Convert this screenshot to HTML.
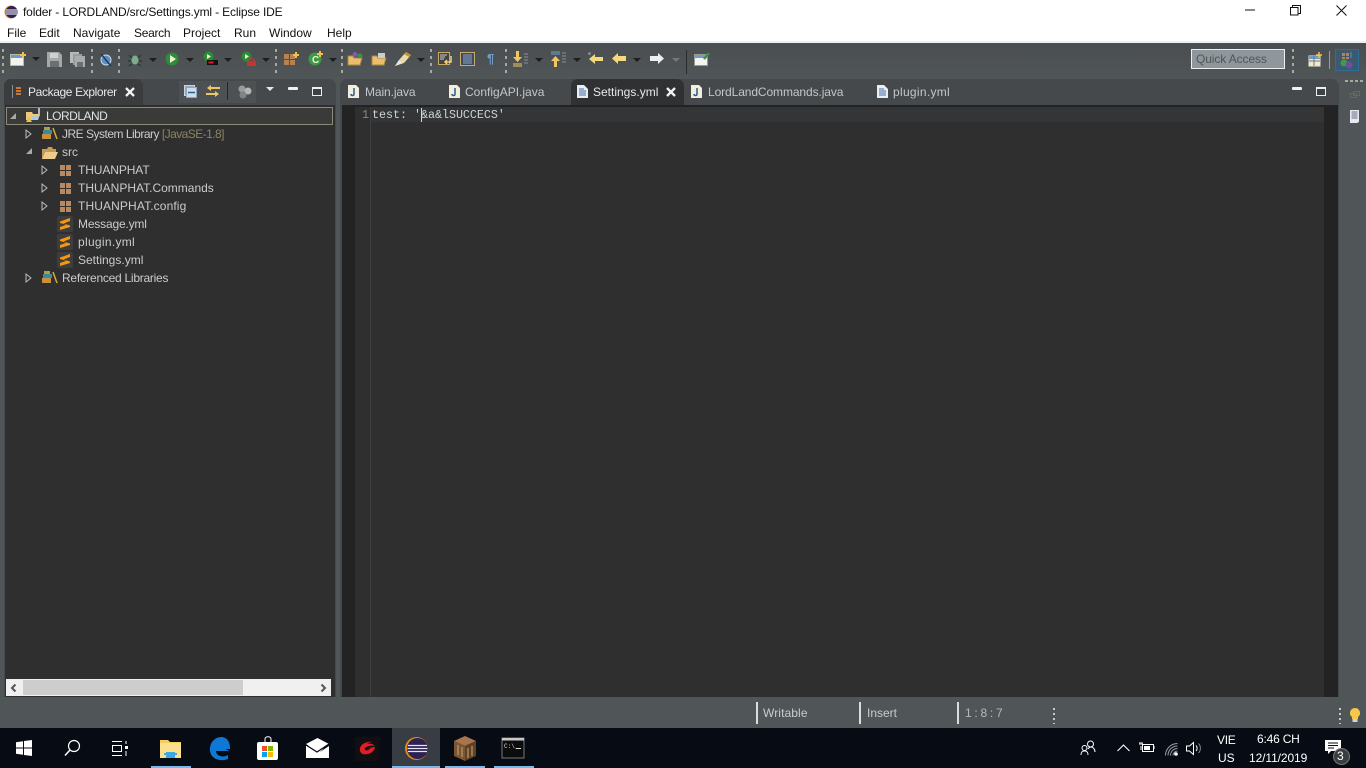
<!DOCTYPE html>
<html><head><meta charset="utf-8"><title>Eclipse IDE</title>
<style>
html,body{margin:0;padding:0;width:1366px;height:768px;overflow:hidden;background:#505557;font-family:"Liberation Sans",sans-serif;font-size:12px}
.a{position:absolute}
.t{position:absolute;white-space:nowrap;line-height:16px}
svg{position:absolute;overflow:visible}
.tree{color:#c8ccce;font-size:12px}
.tab{color:#c3c7c9;font-size:12px}
.grip{position:absolute;width:2px;height:24px;background:repeating-linear-gradient(#a9a9a0 0 3px,transparent 3px 7px)}
.dd{position:absolute;width:0;height:0;border-left:4px solid transparent;border-right:4px solid transparent;border-top:4px solid #1e1e1e}
.menu{position:absolute;top:25px;color:#111;font-size:12px;line-height:16px}
</style></head><body>

<!-- title bar -->
<div class="a" style="left:0;top:0;width:1366px;height:42px;background:#fff"></div>
<div class="a" style="left:0;top:41px;width:1366px;height:2px;background:#eef0f0"></div>
<svg style="left:4px;top:5px" width="14" height="14" viewBox="0 0 14 14"><circle cx="7" cy="7" r="6.5" fill="#e08a1e"/><circle cx="7.600" cy="7" r="6" fill="#2c2255"/><path d="M2 5h11M1.700 7h11.600M2 9h11" stroke="#fff" stroke-width="1"/></svg>
<div class="t" style="left:23px;top:4px;color:#111;font-size:12px;letter-spacing:-.15px">folder - LORDLAND/src/Settings.yml - Eclipse IDE</div>
<svg style="left:1245px;top:9px" width="11" height="2"><path d="M0 1h10" stroke="#111" stroke-width="1"/></svg>
<svg style="left:1290px;top:5px" width="11" height="11"><path d="M.5 2.500h7.500v7.500H.5zM2.500 2.500V.5h8v8H8" fill="none" stroke="#111"/></svg>
<svg style="left:1336px;top:5px" width="11" height="11"><path d="M.5.5l10 10M10.500.5l-10 10" stroke="#111"/></svg>
<div class="menu" style="left:7px">File</div>
<div class="menu" style="left:39px">Edit</div>
<div class="menu" style="left:73px">Navigate</div>
<div class="menu" style="left:134px;letter-spacing:-.3px">Search</div>
<div class="menu" style="left:183px">Project</div>
<div class="menu" style="left:234px">Run</div>
<div class="menu" style="left:269px">Window</div>
<div class="menu" style="left:327px">Help</div>

<!-- toolbar -->
<div class="a" style="left:0;top:43px;width:1366px;height:35px;background:linear-gradient(#4a4e50,#505557)"></div>
<div class="grip" style="left:2px;top:49px"></div>
<svg style="left:10px;top:52px" width="16" height="15"><rect x=".5" y="2.500" width="13" height="11" fill="#f4f4ee" stroke="#b9b9a8"/><rect x="1" y="3" width="12" height="3" fill="#6a9ccc"/><path d="M13 0v6M10 3h6" stroke="#f0c14e" stroke-width="2"/></svg>
<div class="dd" style="left:32px;top:57px"></div>
<svg style="left:47px;top:52px" width="15" height="15"><path d="M0 0h12l3 3v12H0z" fill="#a5a8a9"/><rect x="3" y="1" width="8" height="5" fill="#cfd1d1"/><rect x="3" y="9" width="9" height="6" fill="#6d7072"/></svg>
<svg style="left:70px;top:52px" width="15" height="15"><path d="M0 0h9v11H0z" fill="#b8baba"/><path d="M3 2h9v11H3z" fill="#999c9d"/><path d="M5 4h10v11H5z" fill="#a9acad"/><rect x="7" y="10" width="6" height="5" fill="#6d7072"/></svg>
<div class="grip" style="left:91px;top:49px"></div>
<svg style="left:100px;top:53px" width="12" height="14"><circle cx="6" cy="7" r="5" fill="#5b8ec2" stroke="#c9d9e8"/><path d="M1 1l10 12" stroke="#203a55" stroke-width="1.500"/></svg>
<div class="grip" style="left:118px;top:49px"></div>
<svg style="left:128px;top:52px" width="14" height="15"><ellipse cx="7" cy="8" rx="3.500" ry="4.500" fill="#7fae8c"/><path d="M1 3l3 3M13 3l-3 3M0 9h3M14 9h-3M1 14l3-2M13 14l-3-2" stroke="#1f3d2b" stroke-width="1.200"/></svg>
<div class="dd" style="left:149px;top:58px"></div>
<svg style="left:165px;top:52px" width="14" height="14"><circle cx="7" cy="7" r="6.500" fill="#2e8b36"/><path d="M5 3l6 4-6 4z" fill="#e8f2d8"/></svg>
<div class="dd" style="left:186px;top:58px"></div>
<svg style="left:203px;top:51px" width="15" height="15"><circle cx="5.500" cy="5.500" r="5" fill="#2e8b36"/><path d="M4 3l4 2.500L4 8z" fill="#e8f2d8"/><rect x="4.500" y="9.500" width="10" height="4" fill="#111" stroke="#111"/><rect x="5.500" y="10.500" width="5" height="2" fill="#d22"/></svg>
<div class="dd" style="left:224px;top:58px"></div>
<svg style="left:241px;top:51px" width="16" height="16"><circle cx="5.500" cy="5.500" r="5" fill="#2e8b36"/><path d="M4 3l4 2.500L4 8z" fill="#e8f2d8"/><rect x="6" y="10" width="9" height="5" fill="#c8332e"/><path d="M8 10V8h5v2" fill="none" stroke="#c8332e"/></svg>
<div class="dd" style="left:262px;top:58px"></div>
<div class="grip" style="left:275px;top:49px"></div>
<svg style="left:284px;top:52px" width="15" height="14"><path d="M0 2h5v5H0zM6 2h5v5H6zM0 8h5v5H0zM6 8h5v5H6z" fill="#b58252"/><path d="M12 0v6M9 3h6" stroke="#f0c14e" stroke-width="2"/></svg>
<svg style="left:308px;top:51px" width="16" height="15"><circle cx="7" cy="8" r="6.500" fill="#3e9a42"/><text x="4" y="12" font-size="10" font-weight="bold" fill="#eaf3e0" font-family="Liberation Sans">C</text><path d="M12 0v6M9 3h6" stroke="#f0c14e" stroke-width="2"/></svg>
<div class="dd" style="left:329px;top:58px"></div>
<div class="grip" style="left:341px;top:49px"></div>
<svg style="left:348px;top:51px" width="16" height="15"><path d="M0 5h5l1 2h8l-2 7H0z" fill="#edbe6a" stroke="#a8854a"/><circle cx="7" cy="3.500" r="2.500" fill="#7a5ea8"/><circle cx="12" cy="5" r="2.500" fill="#3e8f4e"/></svg>
<svg style="left:372px;top:52px" width="15" height="14"><path d="M0 4h5l1 2h8l-2 7H0z" fill="#edbe6a" stroke="#a8854a"/><rect x="6" y="1" width="7" height="5" fill="#c9ced0"/></svg>
<svg style="left:395px;top:51px" width="17" height="16"><path d="M0 15L4 9l7-8 5 3-7 8z" fill="#ecd9a8"/><path d="M0 15L4 9l3 3z" fill="#e8e8e8"/><path d="M11 1l5 3-2 2-5-3z" fill="#c98f2e"/></svg>
<div class="dd" style="left:417px;top:58px"></div>
<div class="grip" style="left:430px;top:49px"></div>
<svg style="left:438px;top:52px" width="15" height="14"><rect x=".5" y=".5" width="11" height="12" fill="#444" stroke="#c8aa68"/><path d="M2 3h7M2 5h5M2 7h4" stroke="#c8cdd2"/><path d="M13 4v6H7M9 8l-2 2 2 2" fill="none" stroke="#f0d27a" stroke-width="1.500"/></svg>
<svg style="left:460px;top:52px" width="15" height="14"><rect x=".5" y=".5" width="14" height="13" fill="#3c4c66" stroke="#c8aa68"/><path d="M3 3h9M3 5h9M3 7h9M3 9h9M3 11h9" stroke="#8ea2c0"/></svg>
<div class="t" style="left:487px;top:51px;color:#6f9fcc;font-weight:bold;font-size:13px">¶</div>
<div class="grip" style="left:505px;top:49px"></div>
<svg style="left:513px;top:51px" width="16" height="16"><path d="M3 0h3v6h3l-4.500 5L0 6h3z" fill="#f0c662"/><path d="M0 13h9M0 15h9" stroke="#f0c662"/><path d="M11 3h4M11 6h4M11 9h4M11 12h4" stroke="#8a8f92"/></svg>
<div class="dd" style="left:535px;top:58px"></div>
<svg style="left:551px;top:51px" width="16" height="16"><path d="M3 16v-6H0l4.500-5L9 10H6v6z" fill="#f0c662"/><path d="M0 1h9M0 3h9" stroke="#6f9fcc"/><path d="M11 2h4M11 5h4M11 8h4M11 11h4" stroke="#8a8f92"/></svg>
<div class="dd" style="left:573px;top:58px"></div>
<svg style="left:587px;top:52px" width="16" height="13"><path d="M1 1l2 2M3 0v2" stroke="#8aa8c8"/><path d="M2 7l6-5v3h8v4H8v3z" fill="#f5d77f"/></svg>
<svg style="left:612px;top:53px" width="14" height="11"><path d="M0 5.500L6 0v3h8v5H6v3z" fill="#f5d77f"/></svg>
<div class="dd" style="left:633px;top:58px"></div>
<svg style="left:650px;top:53px" width="14" height="11"><path d="M14 5.500L8 0v3H0v5h8v3z" fill="#eceff0"/></svg>
<div class="dd" style="left:672px;top:58px;border-top-color:#72777a"></div>
<div class="a" style="left:686px;top:50px;width:1px;height:24px;background:#2a2d2e"></div>
<svg style="left:694px;top:52px" width="16" height="15"><rect x=".5" y="2.500" width="13" height="11" fill="#f4f4ee" stroke="#9a9a90"/><rect x="1" y="3" width="12" height="3" fill="#6a9ccc"/><path d="M10 7l5-6" stroke="#3e8f4e" stroke-width="2.500"/></svg>

<div class="a" style="left:1191px;top:49px;width:92px;height:18px;border:1px solid #eef0f0;background:#8f979c"></div>
<div class="t" style="left:1196px;top:51px;color:#505558;font-size:12px;letter-spacing:-.1px">Quick Access</div>
<div class="grip" style="left:1292px;top:49px"></div>
<svg style="left:1308px;top:52px" width="15" height="15"><rect x=".5" y="3.500" width="12" height="11" fill="#eee8d0"/><rect x="1" y="4" width="11" height="3" fill="#6a9ccc"/><path d="M6 4v10M1 9h11" stroke="#777"/><path d="M11 0v6M8 3h6" stroke="#f0c14e" stroke-width="1.500"/></svg>
<div class="a" style="left:1329px;top:51px;width:1px;height:18px;background:#9a9fa1"></div>
<div class="a" style="left:1335px;top:49px;width:22px;height:20px;background:#3b5a70;border:1px solid #2e6d96"></div>
<svg style="left:1339px;top:52px" width="15" height="17"><path d="M3 1h3v3H3zM7 1h3v3H7zM3 5h3v2H3zM7 5h3v2H7z" fill="#b58252"/><path d="M12 0v6" stroke="#5a8ec8"/><circle cx="5" cy="11" r="3.500" fill="#3e9a52"/><circle cx="10" cy="13" r="3.500" fill="#6a4fa0"/></svg>

<!-- left panel -->
<div class="a" style="left:4px;top:79px;width:332px;height:618px;background:#46494b;border-radius:7px 7px 0 0"></div>
<div class="a" style="left:4px;top:79px;width:139px;height:26px;background:#3a3c3e;border-radius:7px 7px 0 0"></div>
<div class="a" style="left:5px;top:105px;width:330px;height:592px;background:#2f2f2f"></div>
<svg style="left:12px;top:85px" width="10" height="13"><path d="M.5 0v13" stroke="#8a8f92"/><path d="M4 2h5v2H4zM4 5h5v2H4zM4 8h5v2H4z" fill="#c9782c"/></svg>
<div class="t" style="left:28px;top:84px;color:#e6eaec;letter-spacing:-.37px">Package Explorer</div>
<svg style="left:125px;top:87px" width="10" height="10"><path d="M1 1l8 8M9 1l-8 8" stroke="#f2f2f2" stroke-width="2.300"/></svg>
<div class="a" style="left:179px;top:81px;width:77px;height:22px;background:#4d5153"></div>
<svg style="left:184px;top:85px" width="13" height="13"><rect x=".5" y=".5" width="10" height="10" fill="#8ba9c4" stroke="#cdd6dc"/><rect x="2.500" y="2.500" width="10" height="10" fill="#cfdde8" stroke="#8ba9c4"/><path d="M4 7.500h7" stroke="#2e5f8c" stroke-width="1.500"/></svg>
<svg style="left:206px;top:84px" width="14" height="14"><path d="M5 1L1 4l4 3V5h9V3H5zM9 7l4 3-4 3v-2H0V9h9z" fill="#edc764"/></svg>
<div class="a" style="left:227px;top:82px;width:1px;height:18px;background:#24272a"></div>
<svg style="left:238px;top:85px" width="14" height="14"><circle cx="4" cy="4" r="3.500" fill="#9a9c9c"/><circle cx="10" cy="6" r="3.500" fill="#b5b6b6"/><circle cx="5" cy="10" r="3.500" fill="#828484"/></svg>
<div class="a" style="left:266px;top:87px;width:0;height:0;border-left:4px solid transparent;border-right:4px solid transparent;border-top:4px solid #e8e8e8"></div>
<div class="a" style="left:288px;top:87px;width:10px;height:3px;background:#f0f0f0;border-radius:1px"></div>
<div class="a" style="left:312px;top:87px;width:8px;height:6px;background:#3f4244;border:1px solid #eee;border-top-width:2px"></div>

<!-- tree -->
<div class="a" style="left:6px;top:107px;width:325px;height:16px;border:1px solid #8b8a78;background:#3a3a38"></div>
<div class="a" style="left:10px;top:113px;width:0;height:0;border-left:6px solid transparent;border-bottom:6px solid #a6a9aa"></div>
<svg style="left:25px;top:108px" width="17" height="15"><path d="M1 4h6l1 2h7l-2 6H1z" fill="#edc979"/><path d="M6 8c3 1 7 0 9-1-1 3-3 5-6 5-2 0-3-2-3-4z" fill="#a8c8e8"/><path d="M14 0v6" stroke="#d8e4ee" stroke-width="1.500"/><path d="M1 14l3-5 3 5z" fill="#f0c040"/></svg>
<div class="t tree" style="left:46px;top:108px;color:#dfe3e5;letter-spacing:-.5px">LORDLAND</div>

<svg style="left:25px;top:129px" width="7" height="10"><path d="M1 1l5 4-5 4z" fill="none" stroke="#b9bcbd"/></svg>
<svg style="left:42px;top:127px" width="16" height="13"><path d="M0 7h9v5H0z" fill="#c8903e"/><path d="M1 3h9v4H1z" fill="#3f8a90"/><path d="M2 0h6v3H2z" fill="#a8a050"/><path d="M11 1l4 11" stroke="#d8a83e" stroke-width="1.500"/></svg>
<div class="t tree" style="left:62px;top:126px;letter-spacing:-.5px">JRE System Library <span style="color:#8d8560;letter-spacing:-.55px">[JavaSE-1.8]</span></div>

<div class="a" style="left:26px;top:148px;width:0;height:0;border-left:6px solid transparent;border-bottom:6px solid #a6a9aa"></div>
<svg style="left:42px;top:146px" width="16" height="13"><path d="M0 3h5l1-2h4l1 2h3v3H3l-3 7z" fill="#c99a52"/><path d="M3 6h13l-3 7H0z" fill="#eccd8d"/></svg>
<div class="t tree" style="left:62px;top:144px">src</div>

<svg style="left:41px;top:165px" width="7" height="10"><path d="M1 1l5 4-5 4z" fill="none" stroke="#b9bcbd"/></svg>
<svg style="left:41px;top:201px" width="7" height="10"><path d="M1 1l5 4-5 4z" fill="none" stroke="#b9bcbd"/></svg>
<svg style="left:41px;top:183px" width="7" height="10"><path d="M1 1l5 4-5 4z" fill="none" stroke="#b9bcbd"/></svg>
<svg style="left:60px;top:165px" width="11" height="11"><path d="M0 0h5v5H0zM6 0h5v5H6zM0 6h5v5H0zM6 6h5v5H6z" fill="#b98a62"/></svg>
<svg style="left:60px;top:183px" width="11" height="11"><path d="M0 0h5v5H0zM6 0h5v5H6zM0 6h5v5H0zM6 6h5v5H6z" fill="#b98a62"/></svg>
<svg style="left:60px;top:201px" width="11" height="11"><path d="M0 0h5v5H0zM6 0h5v5H6zM0 6h5v5H0zM6 6h5v5H6z" fill="#b98a62"/></svg>
<div class="t tree" style="left:78px;top:162px;letter-spacing:-.1px">THUANPHAT</div>
<div class="t tree" style="left:78px;top:180px">THUANPHAT.Commands</div>
<div class="t tree" style="left:78px;top:198px;letter-spacing:.12px">THUANPHAT.config</div>

<div class="a" style="left:57px;top:216px;width:16px;height:16px;background:#3d3d3d;border-radius:2px"></div>
<div class="a" style="left:57px;top:234px;width:16px;height:16px;background:#3d3d3d;border-radius:2px"></div>
<div class="a" style="left:57px;top:252px;width:16px;height:16px;background:#3d3d3d;border-radius:2px"></div>
<svg style="left:60px;top:218px" width="10" height="12"><path d="M0 3.500L10 0v3L3.500 5.500 10 7.500v1.500L0 12V9l6.500-2.200L0 5z" fill="#f5970f"/></svg>
<svg style="left:60px;top:236px" width="10" height="12"><path d="M0 3.500L10 0v3L3.500 5.500 10 7.500v1.500L0 12V9l6.500-2.200L0 5z" fill="#f5970f"/></svg>
<svg style="left:60px;top:254px" width="10" height="12"><path d="M0 3.500L10 0v3L3.500 5.500 10 7.500v1.500L0 12V9l6.500-2.200L0 5z" fill="#f5970f"/></svg>
<div class="t tree" style="left:78px;top:216px;letter-spacing:-.18px">Message.yml</div>
<div class="t tree" style="left:78px;top:234px;letter-spacing:.3px">plugin.yml</div>
<div class="t tree" style="left:78px;top:252px">Settings.yml</div>

<svg style="left:25px;top:273px" width="7" height="10"><path d="M1 1l5 4-5 4z" fill="none" stroke="#b9bcbd"/></svg>
<svg style="left:42px;top:271px" width="16" height="13"><path d="M0 7h9v5H0z" fill="#c8903e"/><path d="M1 3h9v4H1z" fill="#3f8a90"/><path d="M2 0h6v3H2z" fill="#a8a050"/><path d="M11 1l4 11" stroke="#d8a83e" stroke-width="1.500"/></svg>
<div class="t tree" style="left:62px;top:270px;letter-spacing:-.26px">Referenced Libraries</div>

<!-- scrollbar -->
<div class="a" style="left:6px;top:679px;width:325px;height:17px;background:#f0f0f0"></div>
<div class="a" style="left:23px;top:680px;width:220px;height:15px;background:#cdcdcd"></div>
<svg style="left:10px;top:684px" width="7" height="8"><path d="M5.500.5L2 4l3.500 3.500" fill="none" stroke="#555" stroke-width="2"/></svg>
<svg style="left:320px;top:684px" width="7" height="8"><path d="M1.500.5L5 4 1.500 7.500" fill="none" stroke="#555" stroke-width="2"/></svg>

<!-- editor -->
<div class="a" style="left:340px;top:79px;width:999px;height:618px;background:#46494b;border-radius:7px 7px 0 0"></div>
<div class="a" style="left:571px;top:79px;width:113px;height:27px;background:#2f3133;border-radius:7px 7px 0 0"></div>
<div class="a" style="left:342px;top:105px;width:996px;height:592px;background:#2f2f2f;border-top:2px solid #232323;box-sizing:border-box"></div>
<div class="a" style="left:342px;top:107px;width:13px;height:590px;background:#232323"></div>
<div class="a" style="left:355px;top:107px;width:15px;height:590px;background:#2f2f2f;border-right:1px solid #3e3e3e"></div>
<div class="a" style="left:371px;top:107px;width:953px;height:15px;background:#333536"></div>
<div class="a" style="left:1324px;top:107px;width:14px;height:590px;background:#232323"></div>

<svg style="left:348px;top:85px" width="11" height="13"><path d="M0 0h8l3 3v10H0z" fill="#f2eedd"/><path d="M6 3v6c0 2-3 2-3 0" fill="none" stroke="#2c5a8c" stroke-width="1.500"/></svg>
<div class="t tab" style="left:365px;top:84px;letter-spacing:-.1px">Main.java</div>
<svg style="left:449px;top:85px" width="11" height="13"><path d="M0 0h8l3 3v10H0z" fill="#f2eedd"/><path d="M6 3v6c0 2-3 2-3 0" fill="none" stroke="#2c5a8c" stroke-width="1.500"/></svg>
<div class="t tab" style="left:465px;top:84px">ConfigAPI.java</div>
<svg style="left:577px;top:85px" width="11" height="13"><path d="M0 0h7l4 4v9H0z" fill="#e8eef6"/><path d="M2 4h5M2 6h7M2 8h7M2 10h7" stroke="#4a6ea8"/></svg>
<div class="t tab" style="left:593px;top:84px;color:#e6eaec">Settings.yml</div>
<svg style="left:666px;top:87px" width="10" height="10"><path d="M1 1l8 8M9 1l-8 8" stroke="#f2f2f2" stroke-width="2.300"/></svg>
<svg style="left:691px;top:85px" width="11" height="13"><path d="M0 0h8l3 3v10H0z" fill="#f2eedd"/><path d="M6 3v6c0 2-3 2-3 0" fill="none" stroke="#2c5a8c" stroke-width="1.500"/></svg>
<div class="t tab" style="left:708px;top:84px;letter-spacing:-.1px">LordLandCommands.java</div>
<svg style="left:877px;top:85px" width="11" height="13"><path d="M0 0h7l4 4v9H0z" fill="#e8eef6"/><path d="M2 4h5M2 6h7M2 8h7M2 10h7" stroke="#4a6ea8"/></svg>
<div class="t tab" style="left:893px;top:84px;letter-spacing:.3px">plugin.yml</div>
<div class="a" style="left:1292px;top:87px;width:10px;height:3px;background:#f0f0f0;border-radius:1px"></div>
<div class="a" style="left:1316px;top:87px;width:8px;height:6px;background:#3f4244;border:1px solid #eee;border-top-width:2px"></div>

<div class="t" style="left:362px;top:107px;color:#7d8a94;font-family:'Liberation Mono',monospace;font-size:11.670px">1</div>
<div class="t" style="left:372px;top:107px;color:#cfd3d5;font-family:'Liberation Mono',monospace;font-size:11.670px">test: '&amp;a&amp;lSUCCECS'</div>
<div class="a" style="left:421px;top:108px;width:1px;height:14px;background:#d8d8d8"></div>

<!-- right trim -->
<div class="a" style="left:1345px;top:80px;width:18px;height:2px;background:repeating-linear-gradient(90deg,#a9a9a0 0 3px,transparent 3px 5px)"></div>
<svg style="left:1350px;top:90px" width="10" height="9"><path d="M3.500 1.500h6v4h-6zM.5 3.500h6v4h-6z" fill="none" stroke="#6a6660"/></svg>
<svg style="left:1350px;top:110px" width="10" height="14"><path d="M0 0h9v12l-2 1H0z" fill="#e8e8f0"/><path d="M1.500 2h6M1.500 4h6M1.500 6h6M1.500 8h6" stroke="#6a6a8a"/></svg>

<!-- status bar -->
<div class="a" style="left:756px;top:702px;width:2px;height:22px;background:#dcdcdc"></div>
<div class="t" style="left:763px;top:705px;color:#c8ccce;letter-spacing:.1px">Writable</div>
<div class="a" style="left:859px;top:702px;width:2px;height:22px;background:#dcdcdc"></div>
<div class="t" style="left:867px;top:705px;color:#c8ccce">Insert</div>
<div class="a" style="left:957px;top:702px;width:2px;height:22px;background:#dcdcdc"></div>
<div class="t" style="left:965px;top:705px;color:#b5b9bb;letter-spacing:-.3px">1 : 8 : 7</div>
<div class="a" style="left:1053px;top:708px;width:2px;height:16px;background:repeating-linear-gradient(#c9c9c0 0 2px,transparent 2px 5px)"></div>
<div class="a" style="left:1339px;top:708px;width:2px;height:16px;background:repeating-linear-gradient(#c9c9c0 0 2px,transparent 2px 5px)"></div>
<svg style="left:1349px;top:707px" width="12" height="16"><path d="M6 1a5 5 0 0 1 3 9v2H3v-2A5 5 0 0 1 6 1z" fill="#f5c84c"/><rect x="3.500" y="12" width="5" height="3" fill="#d0d4d8"/></svg>

<!-- taskbar -->
<div class="a" style="left:0;top:728px;width:1366px;height:40px;background:#060b14"></div>
<div class="a" style="left:392px;top:728px;width:48px;height:40px;background:#383c43"></div>
<div class="a" style="left:151px;top:766px;width:40px;height:2px;background:#76b9ed"></div>
<div class="a" style="left:392px;top:766px;width:48px;height:2px;background:#76b9ed"></div>
<div class="a" style="left:445px;top:766px;width:40px;height:2px;background:#76b9ed"></div>
<div class="a" style="left:494px;top:766px;width:40px;height:2px;background:#76b9ed"></div>

<svg style="left:16px;top:740px" width="16" height="16"><path d="M0 2.200L7 1.200V7.500H0zM8 1L16 0V7.500H8zM0 8.500H7V14.800L0 13.800zM8 8.500H16V16L8 15z" fill="#fff"/></svg>
<svg style="left:64px;top:740px" width="16" height="16"><circle cx="10" cy="6" r="5.500" fill="none" stroke="#fff" stroke-width="1.200"/><path d="M6 10l-5 5.500" stroke="#fff" stroke-width="1.500"/></svg>
<svg style="left:112px;top:741px" width="16" height="15"><path d="M0 .5h10M0 14.500h10M.5 4.500h9v6h-9z" fill="none" stroke="#fff"/><rect x="13" y="5" width="3" height="3" fill="#fff"/><path d="M14 0v3M14 10v5" stroke="#fff"/></svg>
<svg style="left:160px;top:740px" width="22" height="18"><path d="M0 0h8l2 2h11v5H0z" fill="#f4ce5e"/><rect y="3" width="21" height="15" fill="#fbe08e"/><path d="M6 18v-6h9v6" fill="#3fa8e0"/><rect x="4" y="13" width="13" height="2" fill="#3fa8e0"/></svg>
<svg style="left:209px;top:737px" width="22" height="23"><path d="M20 14H7c0 5 7 7 12 4v4c-8 3-17 0-18-8C0 6 6 0 12 0c6 0 9 5 9 11v1H7c1-4 8-5 8-1z" fill="#0f78d4"/><rect x="6" y="8" width="9" height="3" fill="#0f78d4"/></svg>
<svg style="left:257px;top:736px" width="22" height="24"><path d="M8 6V3c0-3 6-3 6 0v3" fill="none" stroke="#fff"/><rect y="6" width="21" height="18" rx="2" fill="#fff"/><rect x="5" y="10" width="5" height="5" fill="#f25022"/><rect x="11" y="10" width="5" height="5" fill="#7fba00"/><rect x="5" y="16" width="5" height="5" fill="#00a4ef"/><rect x="11" y="16" width="5" height="5" fill="#ffb900"/></svg>
<svg style="left:306px;top:738px" width="23" height="20"><path d="M0 6L11.500 0 23 6 11 13z" fill="#fff"/><path d="M0 8v12h23V8L14 14l8-8z" fill="#fff"/><path d="M0 7l11 7 12-8" fill="none" stroke="#060b14" stroke-width="1.300"/></svg>
<div class="a" style="left:355px;top:737px;width:24px;height:24px;background:#120f12"></div>
<svg style="left:358px;top:740px" width="18" height="18"><path d="M3 6c2-3 7-5 12-4-3 0-5 1-6 2 3-1 6 0 8 2-3-1-8 0-10 2-1 2 1 3 3 2l3-2h-3l7-1c0 3-4 7-8 7C3 16 0 10 3 6z" fill="#e01e26"/></svg>
<svg style="left:405px;top:737px" width="23" height="23"><circle cx="11.500" cy="11.500" r="11.500" fill="#e08a1e"/><circle cx="12.500" cy="11.500" r="10.500" fill="#2c2255"/><path d="M3 8.500h19M2.500 11.500h20M3 14.500h19" stroke="#e8e6f4" stroke-width="1.300"/></svg>
<svg style="left:454px;top:736px" width="22" height="25"><path d="M11 0l11 5-11 5L0 5z" fill="#a9754c"/><path d="M0 5l11 5v15L0 20z" fill="#7a5632"/><path d="M22 5L11 10v15l11-5z" fill="#5e4226"/><path d="M4 9v10M8 11v10M14 12v10M18 10v10" stroke="#c09a68" stroke-width="1.200"/></svg>
<svg style="left:502px;top:738px" width="22" height="20"><rect width="22" height="20" fill="#0c0c0c" stroke="#777"/><rect width="22" height="2.500" fill="#c8c8c8"/><text x="2" y="10" font-size="6" fill="#ddd" font-family="Liberation Mono">C:\_</text><path d="M14 10.500h5" stroke="#ddd"/></svg>

<!-- tray -->
<svg style="left:1080px;top:740px" width="16" height="16"><circle cx="10.500" cy="4" r="3" fill="none" stroke="#fff"/><circle cx="4.500" cy="8" r="2.500" fill="none" stroke="#fff"/><path d="M1 15c0-3 1-4 3.500-4S8 12 8 15M8 9c1-1.500 2-2 3-2 2 0 4 2 4 5" fill="none" stroke="#fff"/></svg>
<svg style="left:1117px;top:744px" width="13" height="8"><path d="M.5 7l6-6 6 6" fill="none" stroke="#fff" stroke-width="1.100"/></svg>
<svg style="left:1139px;top:742px" width="16" height="12"><rect x="3.500" y="2.500" width="11" height="7" fill="none" stroke="#fff"/><rect x="5" y="4" width="6" height="4" fill="#fff"/><path d="M15 4v3" stroke="#fff"/><path d="M0 2h4M1 0v2M3 0v2M2 4v4" stroke="#fff"/></svg>
<svg style="left:1165px;top:743px" width="15" height="13"><path d="M.5 12.500a12 12 0 0 1 12-12M3 12.500a9.500 9.500 0 0 1 9.500-9.500M5.500 12.500a7 7 0 0 1 7-7M8 12.500a4.500 4.500 0 0 1 4.500-4.500" fill="none" stroke="#9a9ea4"/><circle cx="11" cy="11" r="1.800" fill="#fff"/></svg>
<svg style="left:1186px;top:742px" width="16" height="13"><path d="M.5 4h3l4-3.500v12L3.500 9h-3z" fill="none" stroke="#fff"/><path d="M10 3.500c1.500 1.500 1.500 4 0 5.500" fill="none" stroke="#fff"/><path d="M12.500 1.500c2.500 2.500 2.500 7 0 9.500" fill="none" stroke="#888"/></svg>
<div class="t" style="left:1217px;top:732px;color:#fff;font-size:12px;letter-spacing:-.3px">VIE</div>
<div class="t" style="left:1218px;top:750px;color:#fff;font-size:12px">US</div>
<div class="t" style="left:1257px;top:731px;color:#fff;font-size:12px;letter-spacing:-.2px">6:46 CH</div>
<div class="t" style="left:1249px;top:750px;color:#fff;font-size:12px;letter-spacing:-.1px">12/11/2019</div>
<svg style="left:1325px;top:740px" width="16" height="15"><path d="M0 0h16v11H6l-3 3v-3H0z" fill="#fff"/><path d="M3 3h10M3 5.500h10M3 8h6" stroke="#060b14"/></svg>
<div class="a" style="left:1333px;top:748px;width:15px;height:15px;border-radius:50%;background:#3a3d42;border:1px solid #777"></div>
<div class="t" style="left:1337px;top:748px;color:#fff;font-size:12px">3</div>
</body></html>
